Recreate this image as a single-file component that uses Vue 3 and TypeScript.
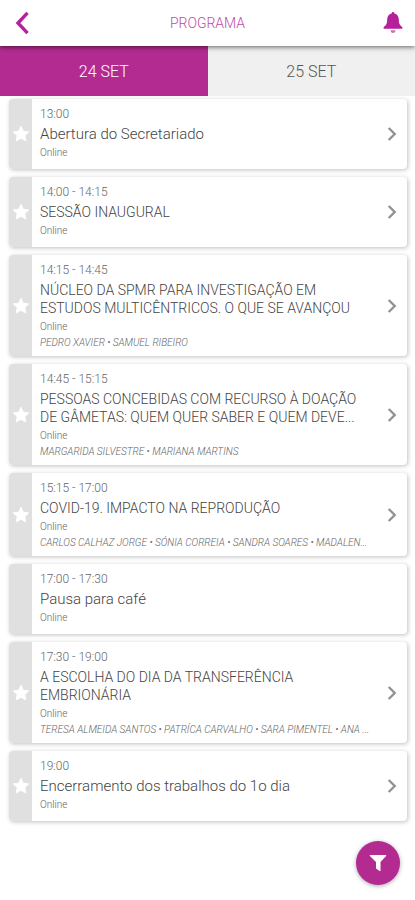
<script setup lang="ts">
import { ref } from 'vue'

interface Session {
  time: string
  title: string
  place: string
  speakers?: string
  linked: boolean
}

const days: string[] = ['24 SET', '25 SET']
const activeDay = ref<string>('24 SET')

const isUppercase = (text: string): boolean => text === text.toUpperCase()

const sessions: Session[] = [
  { time: '13:00', title: 'Abertura do Secretariado', place: 'Online', linked: true },
  { time: '14:00 - 14:15', title: 'SESSÃO INAUGURAL', place: 'Online', linked: true },
  {
    time: '14:15 - 14:45',
    title: 'NÚCLEO DA SPMR PARA INVESTIGAÇÃO EM\nESTUDOS MULTICÊNTRICOS. O QUE SE AVANÇOU',
    place: 'Online',
    speakers: 'PEDRO XAVIER • SAMUEL RIBEIRO',
    linked: true,
  },
  {
    time: '14:45 - 15:15',
    title: 'PESSOAS CONCEBIDAS COM RECURSO À DOAÇÃO\nDE GÂMETAS: QUEM QUER SABER E QUEM DEVE...',
    place: 'Online',
    speakers: 'MARGARIDA SILVESTRE • MARIANA MARTINS',
    linked: true,
  },
  {
    time: '15:15 - 17:00',
    title: 'COVID-19. IMPACTO NA REPRODUÇÃO',
    place: 'Online',
    speakers: 'CARLOS CALHAZ JORGE • SÓNIA CORREIA • SANDRA SOARES • MADALEN...',
    linked: true,
  },
  { time: '17:00 - 17:30', title: 'Pausa para café', place: 'Online', linked: false },
  {
    time: '17:30 - 19:00',
    title: 'A ESCOLHA DO DIA DA TRANSFERÊNCIA\nEMBRIONÁRIA',
    place: 'Online',
    speakers: 'TERESA ALMEIDA SANTOS • PATRÍCA CARVALHO • SARA PIMENTEL • ANA ...',
    linked: true,
  },
  { time: '19:00', title: 'Encerramento dos trabalhos do 1o dia', place: 'Online', linked: true },
]
</script>

<template>
  <div class="app">
    <header class="bar">
      <button class="bar-btn" type="button" aria-label="Voltar">
        <svg width="16" height="24" viewBox="0 0 16 24">
          <path d="M13.500 1.800 4 12l9.500 10.200" fill="none" stroke="currentColor" stroke-width="3.400" />
        </svg>
      </button>
      <h1>PROGRAMA</h1>
      <button class="bar-btn" type="button" aria-label="Notificações">
        <svg width="20" height="22" viewBox="0 0 20 22" fill="currentColor">
          <path d="M10 0c.8 0 1.400.6 1.500 1.500 2.700.7 4.200 2.900 4.300 5.800.1 4 .7 5.900 3.400 7.800.5.500.300 1.600-.4 1.600H1.200c-.7 0-.9-1.100-.4-1.600 2.700-1.900 3.300-3.800 3.400-7.800.1-2.900 1.600-5.100 4.300-5.800C8.600.6 9.200 0 10 0z" />
          <path d="M7.500 18.300h5c0 1.600-1.100 2.700-2.500 2.700s-2.500-1.100-2.500-2.700z" opacity=".65" />
        </svg>
      </button>
    </header>

    <nav class="tabs">
      <button
        v-for="day in days"
        :key="day"
        type="button"
        class="tab"
        :class="{ active: day === activeDay }"
        @click="activeDay = day"
      >
        {{ day }}
      </button>
    </nav>

    <main class="list">
      <article v-for="s in sessions" :key="s.time" class="card">
        <button v-if="s.linked" class="strip" type="button" aria-label="Favorito">
          <svg width="18" height="18" viewBox="0 0 18 18">
            <path
              d="m9 1.300 2.300 4.900 5.400.7-3.900 3.700 1 5.300L9 13.300l-4.800 2.600 1-5.300L1.300 6.900l5.400-.7z"
              fill="#fff" stroke="#fff" stroke-width="1" stroke-linejoin="round"
            />
          </svg>
        </button>
        <div v-else class="strip"></div>
        <div class="info">
          <p class="time">{{ s.time }}</p>
          <h2 class="title" :class="{ caps: isUppercase(s.title) }">{{ s.title }}</h2>
          <p class="place">{{ s.place }}</p>
          <p v-if="s.speakers" class="speakers">{{ s.speakers }}</p>
        </div>
        <a v-if="s.linked" class="more" href="#" :aria-label="s.title">
          <svg width="10" height="16" viewBox="0 0 10 16">
            <path d="m1.700 2 6 6-6 6" fill="none" stroke="#929292" stroke-width="2.400" />
          </svg>
        </a>
      </article>
    </main>

    <button class="fab" type="button" aria-label="Filtrar">
      <svg width="18" height="18" viewBox="0 0 18 18">
        <path d="M1.300 1h15.400c.5 0 .7.600.400 1L11.500 8v8.600c0 .5-.5.700-.9.400L7 14.400V8L.9 2c-.3-.4-.1-1 .4-1z" fill="#fff" />
      </svg>
    </button>
  </div>
</template>

<style>
body {
  background: #fff;
}
</style>

<style scoped>
.app {
  font-family: Roboto, "Liberation Sans", sans-serif;
  font-weight: 300;
  color: #444;
}

button {
  border: 0;
  padding: 0;
  background: none;
  font: inherit;
  color: inherit;
  cursor: pointer;
}

h1,
h2,
p {
  margin: 0;
  font-weight: 300;
}

.bar {
  position: relative;
  z-index: 1;
  display: flex;
  align-items: center;
  justify-content: space-between;
  height: 46px;
  padding: 0 12px;
  box-sizing: border-box;
  background: #fff;
  color: #b5209b;
  box-shadow: 0 1px 5px rgba(0, 0, 0, 0.6);
}

.bar h1 {
  font-size: 14px;
  line-height: 18px;
  color: #c04aa8;
}

.bar-btn {
  display: grid;
  place-items: center;
  width: 20px;
  height: 24px;
}

.tabs {
  display: grid;
  grid-template-columns: 1fr 1fr;
}

.tab {
  height: 50px;
  background: #f0f0f0;
  color: #555;
  font-size: 16px;
}

.tab.active {
  background: #b32b91;
  color: #fff;
}

.list {
  display: flex;
  flex-direction: column;
  gap: 8px;
  padding: 3px 8px 77px 9px;
}

.card {
  display: grid;
  grid-template-columns: 23px minmax(0, 1fr) 30px;
  min-height: 70px;
  border-radius: 4px;
  background: #fff;
  box-shadow: 1px 1px 4px rgba(0, 0, 0, 0.25);
}

.strip {
  display: grid;
  place-items: center;
  border-radius: 4px 0 0 4px;
  background: #e0e0e0;
}

.info {
  padding: 8px 0 6px 8px;
}

.time {
  font-size: 12px;
  line-height: 15px;
  color: #666;
}

.title {
  margin: 3px 0;
  font-size: 15px;
  line-height: 18px;
  white-space: pre;
}

.title.caps {
  font-size: 14px;
}

.place {
  font-size: 10px;
  line-height: 14px;
  color: #666;
}

.speakers {
  margin-top: 2px;
  font-size: 10px;
  line-height: 14px;
  font-style: italic;
  color: #666;
  white-space: nowrap;
}

.more {
  display: grid;
  place-items: center;
}

.fab {
  position: fixed;
  right: 15px;
  bottom: 15px;
  display: grid;
  place-items: center;
  width: 44px;
  height: 44px;
  border-radius: 50%;
  background: #b32b91;
  box-shadow: 0 1px 4px rgba(0, 0, 0, 0.35);
}
</style>
